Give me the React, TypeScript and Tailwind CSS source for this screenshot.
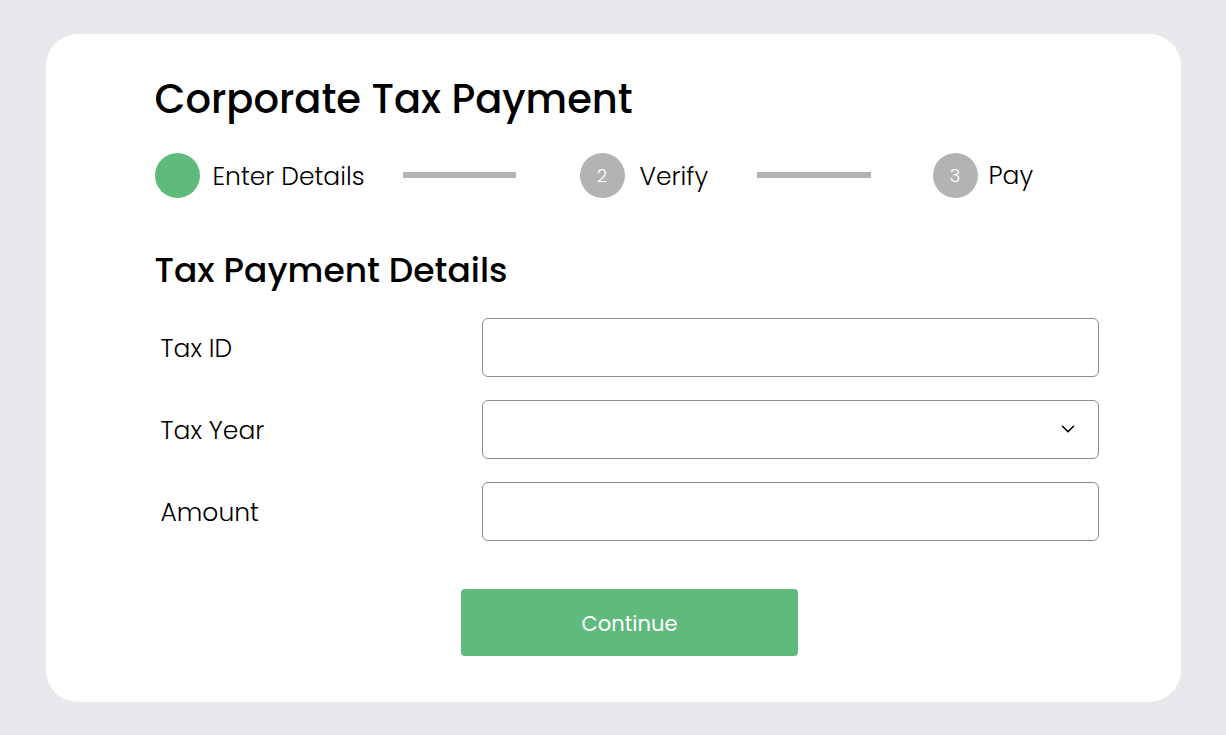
import { ChevronDown } from "lucide-react";

const font = { fontFamily: "Poppins, Inter, 'Noto Sans', sans-serif" };

function Field({ label, select }: { label: string; select?: boolean }) {
  return (
    <div className="flex items-center">
      <label className="mt-[3px] w-[327px] pl-[6px] text-[25px] font-light text-black">{label}</label>
      <div className="relative flex h-[59px] w-[617px] items-center rounded-[6px] border border-[#8c8c8c] bg-white">
        {select && (
          <ChevronDown className="absolute right-[19px] text-black" size={22} strokeWidth={1.75} />
        )}
      </div>
    </div>
  );
}

export default function App() {
  return (
    <div className="flex min-h-screen items-center justify-center bg-[#e8e9ed]" style={font}>
      <div className="h-[668px] w-[1135px] rounded-[32px] bg-white pl-[109px] pr-[82px] pt-[35px]">
        <h1 className="text-[40px] font-medium leading-[60px] text-black">Corporate Tax Payment</h1>

        <div className="mt-[24px] flex h-[45px] items-center">
          <div className="flex w-[248px] items-center">
            <div className="h-[45px] w-[45px] rounded-full bg-[#5fba7d]" />
            <span className="ml-[13px] mt-[3px] text-[25px] font-light text-black">Enter Details</span>
          </div>
          <div className="h-[6px] w-[113px] bg-[#b3b3b3]" />
          <div className="ml-[64px] flex w-[177px] items-center">
            <div className="flex h-[45px] w-[45px] items-center justify-center rounded-full bg-[#b3b3b3] text-[18px] font-light text-white">
              2
            </div>
            <span className="ml-[15px] mt-[3px] text-[25px] font-light text-black">Verify</span>
          </div>
          <div className="h-[6px] w-[114px] bg-[#b3b3b3]" />
          <div className="ml-[62px] flex items-center">
            <div className="flex h-[45px] w-[45px] items-center justify-center rounded-full bg-[#b3b3b3] text-[18px] font-light text-white">
              3
            </div>
            <span className="ml-[11px] mt-[1px] text-[25px] font-light text-black">Pay</span>
          </div>
        </div>

        <h2 className="mt-[48px] text-[34.5px] font-medium leading-[48px] text-black">Tax Payment Details</h2>

        <div className="mt-[24px] flex w-[944px] flex-col gap-[23px]">
          <Field label="Tax ID" />
          <Field label="Tax Year" select />
          <Field label="Amount" />
        </div>

        <div className="mt-[48px] flex w-[950px] justify-center">
          <button className="h-[67px] w-[337px] rounded-[4px] bg-[#5fba7d] pt-[3px] text-[21px] font-normal text-white">
            Continue
          </button>
        </div>
      </div>
    </div>
  );
}
